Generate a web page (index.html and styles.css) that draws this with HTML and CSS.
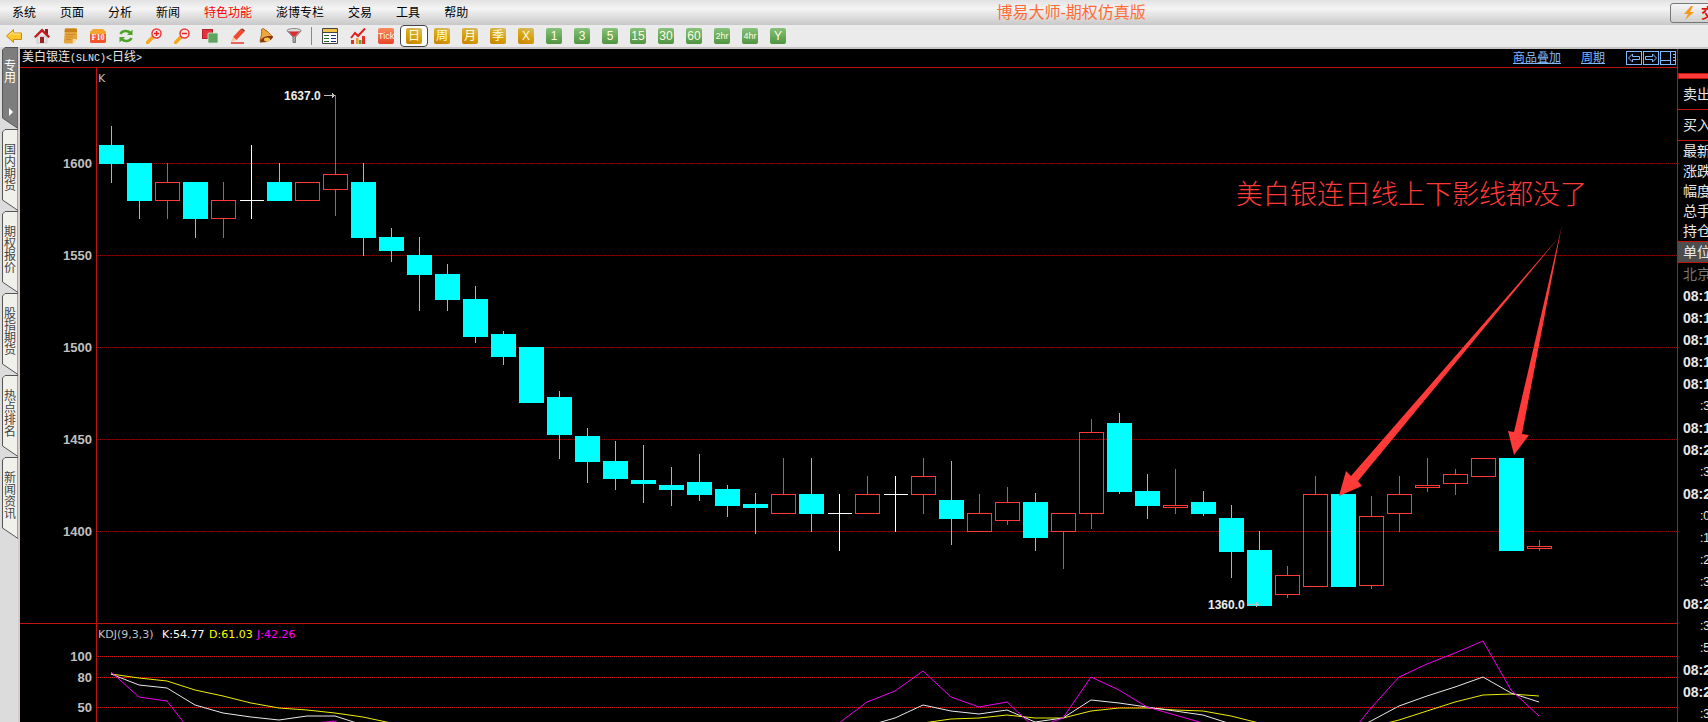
FILE: index.html
```html
<!DOCTYPE html>
<html lang="zh-CN">
<head>
    <meta charset="UTF-8">
    <meta name="viewport" content="width=device-width, initial-scale=1.0">
    <title>博易大师-期权仿真版</title>
    <link rel="stylesheet" href="styles.css">
</head>
<body>
    <header class="menubar">
        <nav class="menu">
            <button>系统</button>
            <button>页面</button>
            <button>分析</button>
            <button>新闻</button>
            <button class="hot">特色功能</button>
            <button>澎博专栏</button>
            <button>交易</button>
            <button>工具</button>
            <button>帮助</button>
        </nav>
        <h1>博易大师-期权仿真版</h1>
        <div class="trade-box">
            <button class="trade">
                <svg width="12" height="16" viewBox="0 0 12 16"><path d="M8 1L1 9h4l-3 6 9-8H7l3-6z" fill="#f39a1d"/></svg>
                交易
            </button>
        </div>
    </header>

    <div class="toolbar">
        <button class="tool" aria-label="后退">
            <svg viewBox="0 0 16 16"><path d="M.5 8L7.500 1.500V5H15.500v6.500H7.500V14.500z" fill="#fcc62c" stroke="#c98a10"/><path d="M3 7.500l4-3.500v2h7.500" fill="none" stroke="#ffe88a"/></svg>
        </button>
        <button class="tool" aria-label="首页">
            <svg viewBox="0 0 16 16"><path d="M3 8h10v7H3z" fill="#e4e4e4" stroke="#aaa" stroke-width=".5"/><path d="M11 1h3v5h-3z" fill="#8a2020"/><path d="M0 8.500L8 .5l8 8-1.500 1.500L8 4 1.500 10z" fill="#c11920"/><path d="M6 9h4v6H6z" fill="#922"/></svg>
        </button>
        <button class="tool" aria-label="便签">
            <svg viewBox="0 0 16 16"><path d="M3 .5h11q1 0 1 1V11l-4 4.500H3q-2-1-1-3z" fill="#e5a33a"/><path d="M3 .5h11q1 0 1 1V4H2.500z" fill="#c98219"/><path d="M10.500 15.500L11 11h4z" fill="#fbe2a4"/><path d="M4 6.500h9M4 9h7M4 11.500h5" stroke="#c5862a" stroke-width=".8"/></svg>
        </button>
        <button class="tool" aria-label="F10">
            <svg viewBox="0 0 16 16"><rect y="3" width="16" height="12" rx="1.500" fill="#f0562c"/><path d="M0 4l3-3h10l3 3v2H0z" fill="#f5a62f"/><text x="8" y="12" class="f10">F10</text></svg>
        </button>
        <button class="tool" aria-label="刷新">
            <svg viewBox="0 0 16 16" fill="none" stroke="#4ea32a" stroke-width="2.500"><path d="M2.500 6C4 2.500 9.500 2 12.500 5"/><path d="M13.500 10C12 13.500 6.500 14 3.500 11"/><path d="M14.500 1.500V7H9zM1.500 14.500V9H7z" fill="#4ea32a" stroke="none"/></svg>
        </button>
        <button class="tool" aria-label="放大">
            <svg viewBox="0 0 16 16"><path d="M1.500 14.500L7 9" stroke="#f5a81c" stroke-width="3.500" stroke-linecap="round"/><circle cx="10.500" cy="5.500" r="4.500" fill="#ffe9e6" stroke="#ea3a3a" stroke-width="1.500"/><path d="M8 5.500h5M10.500 3v5" stroke="#e02020" stroke-width="1.500"/></svg>
        </button>
        <button class="tool" aria-label="缩小">
            <svg viewBox="0 0 16 16"><path d="M1.500 14.500L7 9" stroke="#f5a81c" stroke-width="3.500" stroke-linecap="round"/><circle cx="10.500" cy="5.500" r="4.500" fill="#ffe9e6" stroke="#ea3a3a" stroke-width="1.500"/><path d="M8 5.500h5" stroke="#e02020" stroke-width="1.500"/></svg>
        </button>
        <button class="tool" aria-label="叠加">
            <svg viewBox="0 0 16 16"><rect x=".5" y="1.500" width="10" height="9" fill="#e2343a" stroke="#b51f26"/><rect x="6" y="5" width="10" height="10" rx="1" fill="#5fa562" stroke="#d5e9d5" stroke-width=".8"/></svg>
        </button>
        <button class="tool" aria-label="画线">
            <svg viewBox="0 0 16 16"><path d="M3 9L10.500 1 14 4 6.500 12z" fill="#ee4a32"/><path d="M10.500 1L14 4l1-1.500L12.500.5z" fill="#a82d20"/><path d="M3 9l3.500 3L1 14z" fill="#f5c795"/><path d="M1 15h13" stroke="#e83a2c" stroke-width="1.500"/></svg>
        </button>
        <button class="tool" aria-label="预警">
            <svg viewBox="0 0 16 16"><path d="M3.500 1.500c1-1.500 3-1 3.500.5 3 .5 4 4 8 7L2.500 14.500C1 12 4.500 8 3.500 1.500z" fill="#eda83a" stroke="#9b4d10" stroke-width=".8"/><path d="M2 13c2-4 8-6 13-4.500-.5 4-10 8-13 4.500z" fill="#8a3410"/><ellipse cx="9" cy="11.500" rx="3" ry="2" fill="#f6c850"/></svg>
        </button>
        <button class="tool" aria-label="筛选">
            <svg viewBox="0 0 16 16"><path d="M1.500 3L7 9v5.500h2.500V9L15 3z" fill="#aaa" stroke="#777"/><ellipse cx="8" cy="2.500" rx="7" ry="2" fill="#ddd" stroke="#888"/><path d="M3 3.500h10L9 8.500H7z" fill="#e22832"/></svg>
        </button>
        <span class="divider"></span>
        <button class="tool" aria-label="报价">
            <svg viewBox="0 0 16 16"><path d="M.5 .5h15v15H.5z" fill="#fff" stroke="#444"/><path d="M1 1h14v3H1z" fill="#f0c348"/><path d="M0 4.500h16" stroke="#444"/><path d="M2 7.500h5M2 10.500h5M2 13.500h5" stroke="#216b34"/><path d="M9 7.500h5M9 10.500h5M9 13.500h5" stroke="#1c2d86"/></svg>
        </button>
        <button class="tool" aria-label="走势">
            <svg viewBox="0 0 16 16"><path d="M1 12h3v4H1zM12 8h3v8h-3z" fill="#e03028"/><path d="M6 10h2.500v6H6z" fill="#f09a28"/><path d="M9 12h2.500v4H9z" fill="#54a53c"/><path d="M1 10l4-5 3 3 7-7.500" fill="none" stroke="#e01f1f" stroke-width="2"/></svg>
        </button>
        <button class="tool"><span class="key tick">Tick</span></button>
        <button class="tool on"><span class="key gold">日</span></button>
        <button class="tool"><span class="key gold">周</span></button>
        <button class="tool"><span class="key gold">月</span></button>
        <button class="tool"><span class="key gold">季</span></button>
        <button class="tool"><span class="key gold">X</span></button>
        <button class="tool"><span class="key">1</span></button>
        <button class="tool"><span class="key">3</span></button>
        <button class="tool"><span class="key">5</span></button>
        <button class="tool"><span class="key">15</span></button>
        <button class="tool"><span class="key">30</span></button>
        <button class="tool"><span class="key">60</span></button>
        <button class="tool"><span class="key small">2hr</span></button>
        <button class="tool"><span class="key small">4hr</span></button>
        <button class="tool"><span class="key">Y</span></button>
    </div>

    <main class="workspace">
        <aside class="tabs">
            <button class="tab active"><svg width="16" height="82"><path d="M16 .5H3L.5 3v68L16 81.500z"/></svg><span>专用</span><i></i></button>
            <button class="tab"><svg width="16" height="82"><path d="M16 .5H3L.5 3v68L16 81.500z"/></svg><span>国内期货</span></button>
            <button class="tab"><svg width="16" height="82"><path d="M16 .5H3L.5 3v68L16 81.500z"/></svg><span>期权报价</span></button>
            <button class="tab"><svg width="16" height="82"><path d="M16 .5H3L.5 3v68L16 81.500z"/></svg><span>股指期货</span></button>
            <button class="tab"><svg width="16" height="82"><path d="M16 .5H3L.5 3v68L16 81.500z"/></svg><span>热点排名</span></button>
            <button class="tab"><svg width="16" height="82"><path d="M16 .5H3L.5 3v68L16 81.500z"/></svg><span>新闻资讯</span></button>
        </aside>

        <section class="chart">
            <div class="chart-head">
                <h2>美白银连<span class="code">(SLNC)&lt;</span>日线<span class="code">&gt;</span></h2>
                <a href="#">商品叠加</a>
                <a href="#">周期</a>
                <div class="pager">
                    <button aria-label="上一个"><svg width="14" height="12"><path d="M1.500 6L5.500 2v2.500h7v3h-7V10z"/></svg></button>
                    <button aria-label="下一个"><svg width="14" height="12"><path d="M12.500 6L8.500 2v2.500h-7v3h7V10z"/></svg></button>
                    <button aria-label="分栏"><svg width="14" height="12"><path d="M0 8.500h10M9.500 0v12M12 2.500h2M12 5.500h2M12 8.500h2"/></svg></button>
                </div>
            </div>
            <svg id="plot" class="plot">
                <g id="grid"></g>
                <g id="candles"></g>
                <g id="kdj"></g>
                <path class="frame" d="M76.500 0V2000"/>
                <line class="frame" x1="0" x2="100%" y1="555.5" y2="555.5"/>
                <text class="name" x="78" y="14">K</text>
                <text class="mark" x="264" y="32">1637.0</text>
                <path class="pointer" d="M304 27.500h11M312.500 25v5M313.500 26v3"/>
                <text class="mark" x="1188" y="541">1360.0</text>
                <path class="pointer" d="M1228 536.500h11M1236.500 534v5M1237.500 535v3"/>
                <text class="kdj-text" y="570"><tspan x="78" class="c-name">KDJ(9,3,3)</tspan><tspan x="142" class="c-k">K:54.77</tspan><tspan x="189" class="c-d">D:61.03</tspan><tspan x="237" class="c-j">J:42.26</tspan></text>
                <text class="note" x="1216" y="136">美白银连日线上下影线都没了</text>
                <polygon class="arrow" points="1540,168 1331,408 1326,403 1319,428 1342,418 1338,413"/>
                <polygon class="arrow" points="1542,157 1494,364 1488,363 1494,387 1509,367 1502,366"/>
            </svg>
        </section>

        <aside class="quote">
            <div class="quote-bar"></div>
            <div class="side">卖出</div>
            <div class="side">买入</div>
            <ul class="fields">
                <li>最新</li>
                <li>涨跌</li>
                <li>幅度</li>
                <li>总手</li>
                <li>持仓</li>
            </ul>
            <div class="unit">单位</div>
            <div class="zone">北京</div>
            <ul class="ticks" id="ticks"></ul>
        </aside>
    </main>
    <script src="chart.js"></script>
</body>
</html>
```
FILE: styles.css
```css
* {
    box-sizing: border-box;
}
body {
    margin: 0;
    height: 100vh;
    display: flex;
    flex-direction: column;
    overflow: hidden;
    background: #000;
    font: 12px/16px "Liberation Sans", "Noto Sans CJK SC", sans-serif;
}
button {
    margin: 0;
    padding: 0;
    border: none;
    background: none;
    font: inherit;
    color: #000;
    cursor: pointer;
}
h1, h2, ul {
    margin: 0;
    padding: 0;
    font-weight: normal;
    list-style: none;
}

/* menu */
.menubar {
    flex: none;
    height: 25px;
    display: flex;
    align-items: center;
    background: linear-gradient(#e2e2e2, #f4f4f4 35%, #c8c8c8);
}
.menu {
    display: flex;
    gap: 24px;
    padding-left: 12px;
    white-space: nowrap;
}
.menu .hot {
    color: #f00;
}
.menubar h1 {
    flex: 1;
    padding-left: 4px;
    text-align: center;
    font-size: 16px;
    line-height: 24px;
    color: #ff6c36;
}
.trade-box {
    width: 38px;
    overflow: hidden;
}
.trade {
    display: flex;
    align-items: center;
    gap: 6px;
    width: 72px;
    height: 20px;
    padding-left: 12px;
    border: 1px solid #777;
    border-radius: 3px;
    background: linear-gradient(#f6f6f6, #d0d0d0);
    font-size: 14px;
    font-weight: bold;
    color: #e01010;
}

/* toolbar */
.toolbar {
    flex: none;
    height: 24px;
    display: flex;
    border-bottom: 2px solid #c9c4c4;
    background: #ebebeb;
}
.tool {
    width: 28px;
    height: 22px;
    display: flex;
    align-items: center;
    justify-content: center;
}
.tool svg {
    width: 16px;
    height: 16px;
}
.tool.on {
    border: 1px solid #444;
    border-radius: 4px;
    background: #fff;
}
.f10 {
    font: bold 8px "Liberation Serif", serif;
    fill: #fff;
    text-anchor: middle;
}
.divider {
    width: 1px;
    height: 18px;
    margin: 2px 4px 0 3px;
    background: #888;
}
.key {
    width: 16px;
    height: 16px;
    border-radius: 2px;
    background: linear-gradient(#87c27a, #4f9440);
    color: #fffde0;
    font-size: 12px;
    line-height: 16px;
    text-align: center;
}
.key.gold {
    background: linear-gradient(20deg, #c78000, #d8a50c 50%, #d8bd72);
}
.key.tick {
    background: linear-gradient(#f98a60, #e8452a);
    font-size: 9px;
}
.key.small {
    font-size: 9px;
}

/* left tabs */
.workspace {
    flex: 1;
    min-height: 0;
    display: flex;
}
.tabs {
    flex: none;
    width: 20px;
    margin-top: -2px;
    padding-left: 2px;
    border-right: 2px solid #d4cccc;
    background: #dcdcdc;
}
.tab {
    position: relative;
    display: block;
    width: 16px;
    height: 82px;
    padding: 15px 2px 0;
    font-size: 12px;
    line-height: 12px;
    color: #444;
}
.tab svg {
    position: absolute;
    top: 0;
    left: 0;
    fill: #f1f1ec;
    stroke: #555;
}
.tab span {
    position: relative;
    display: block;
    height: 67px;
    word-break: break-all;
}
.tab.active {
    padding-top: 11px;
    color: #fff;
}
.tab.active svg {
    fill: #7d7d7d;
}
.tab i {
    position: absolute;
    left: 7px;
    top: 61px;
    border: 4px solid transparent;
    border-left-color: #fff;
    border-right: none;
}

/* chart */
.chart {
    flex: 1;
    min-width: 0;
    display: flex;
    flex-direction: column;
}
.chart-head {
    flex: none;
    height: 19px;
    display: flex;
    align-items: center;
    padding: 0 1px 1px 2px;
    border-bottom: 1px solid #c01410;
}
.chart-head h2 {
    flex: 1;
    font-size: 12px;
    line-height: 16px;
    color: #e8e8e8;
}
.code {
    font-family: "Liberation Mono", monospace;
    font-size: 10px;
}
.chart-head a {
    margin-right: 20px;
    color: #7fb8ff;
}
.pager {
    display: flex;
    gap: 1px;
    padding-left: 1px;
}
.pager button {
    width: 16px;
    height: 14px;
    border: 1px solid #7fb8ff;
}
.pager svg {
    display: block;
    fill: none;
    stroke: #7fb8ff;
}
.plot {
    flex: 1;
    width: 100%;
    min-height: 0;
    display: block;
}
.frame {
    stroke: #c01410;
}
.grid-line {
    stroke: #8c0a0a;
    stroke-dasharray: 1 1;
}
.grid-line.bright {
    stroke: #d01818;
}
.axis {
    font: bold 13px "Liberation Sans", sans-serif;
    fill: #c0c0c0;
    text-anchor: end;
}
.mark {
    font: bold 12px "Liberation Sans", sans-serif;
    fill: #eee;
}
.name,
.kdj-text {
    font: 11px "DejaVu Sans", sans-serif;
}
.name {
    fill: #c0c0c0;
}
.pointer {
    fill: none;
    stroke: #c0c0c0;
}
#candles {
    shape-rendering: crispEdges;
}
.up {
    fill: none;
    stroke: #ff3a38;
}
.down {
    fill: #0ff;
    stroke: #0ff;
}
.flat {
    stroke: #fff;
}
.c-name { fill: #c0c0c0; }
.c-k { fill: #fff; }
.c-d { fill: #ff0; }
.c-j { fill: #f0f; }
.line {
    fill: none;
    stroke-width: 1;
}
.line.k { stroke: #e8e8e8; }
.line.d { stroke: #ee0; }
.line.j { stroke: #e0e; }
.note {
    font: 300 27px "Noto Sans CJK SC", sans-serif;
    fill: #ff3a38;
}
.arrow {
    fill: #ff3a38;
}

/* quote panel */
.quote {
    flex: none;
    width: 31px;
    overflow: hidden;
    border-left: 1px solid #c01410;
    color: #e8e8e8;
    font-size: 14px;
    white-space: nowrap;
}
.quote-bar {
    height: 6px;
    margin: 24px 0 0;
    border: 1px solid #c01410;
    border-right: none;
    background: #ff3a38;
}
.side {
    height: 31px;
    padding-left: 5px;
    border-bottom: 1px solid #c01410;
    line-height: 30px;
}
.fields {
    padding-left: 5px;
    line-height: 20px;
}
.unit {
    height: 22px;
    padding-left: 5px;
    border: 1px solid #c01410;
    border-width: 1px 0;
    background: #4d4d4d;
    line-height: 20px;
}
.zone {
    padding-left: 5px;
    line-height: 22px;
    color: #777;
}
.ticks {
    padding-left: 5px;
    line-height: 22px;
    font-weight: bold;
}
.ticks .sec {
    padding-left: 17px;
    font-size: 12px;
    font-weight: normal;
}
```
FILE: chart.js
```js
// high, open, close, low
const bars = [
    [1620, 1610, 1600, 1590], [1600, 1600, 1580, 1570], [1600, 1580, 1590, 1570], [1590, 1590, 1570, 1560],
    [1590, 1570, 1580, 1560], [1610, 1580, 1580, 1570], [1600, 1590, 1580, 1580], [1590, 1580, 1590, 1580],
    [1637, 1586, 1594, 1572], [1600, 1590, 1560, 1550], [1565, 1560, 1553, 1547], [1560, 1550, 1540, 1520],
    [1545, 1540, 1526, 1520], [1533, 1526, 1506, 1503], [1509, 1507, 1495, 1491], [1500, 1500, 1470, 1470],
    [1476, 1473, 1453, 1440], [1456, 1452, 1438, 1427], [1449, 1438, 1429, 1423], [1447, 1428, 1426, 1416],
    [1435, 1425, 1423, 1414], [1442, 1427, 1420, 1417], [1425, 1423, 1414, 1408], [1421, 1415, 1413, 1399],
    [1440, 1410, 1420, 1410], [1440, 1420, 1410, 1400], [1420, 1410, 1410, 1390], [1430, 1410, 1420, 1410],
    [1430, 1420, 1420, 1400], [1440, 1420, 1430, 1410], [1438, 1417, 1407, 1393], [1420, 1400, 1410, 1400],
    [1424, 1406, 1416, 1404], [1421, 1416, 1397, 1390], [1410, 1400, 1410, 1380], [1461, 1410, 1454, 1402],
    [1464, 1459, 1422, 1421], [1431, 1422, 1414, 1407], [1434, 1413, 1414, 1410], [1422, 1416, 1410, 1409],
    [1414, 1407, 1389, 1375], [1400, 1390, 1360, 1360], [1381, 1366, 1376, 1364], [1430, 1370, 1420, 1370],
    [1420, 1420, 1370, 1370], [1419, 1371, 1408, 1369], [1430, 1410, 1420, 1400], [1440, 1424, 1425, 1422],
    [1434, 1426, 1431, 1420], [1440, 1430, 1440, 1430], [1440, 1440, 1390, 1390], [1395, 1391, 1392, 1390]
];

const kdj = {
    d: [83, 79, 76, 67, 61, 54, 49, 47, 45, 41, 35, 30, 26, 23, 21, 20, 18, 17, 16, 15, 15, 16, 17, 18, 20, 22, 25, 28, 31, 35, 39, 40, 43, 40, 40, 46, 49, 49, 47, 46, 42, 35, 29, 25, 26, 31, 38, 46, 55, 62, 63, 61],
    k: [83, 72, 69, 52, 45, 41, 38, 42, 42, 33, 26, 22, 18, 15, 14, 13, 12, 12, 12, 13, 14, 16, 18, 20, 22, 25, 28, 32, 40, 52, 46, 44, 47, 36, 40, 57, 54, 50, 46, 43, 34, 25, 20, 20, 24, 37, 51, 61, 70, 80, 64, 55],
    j: [85, 60, 56, 21, 10, 8, 25, 34, 37, 16, 8, 5, 5, 5, 5, 5, 5, 5, 5, 5, 8, 10, 12, 14, 16, 20, 35, 55, 66, 86, 60, 50, 55, 30, 40, 80, 67, 50, 43, 35, 22, 10, 5, 8, 15, 49, 80, 93, 103, 115, 67, 42]
};

const times = ['08:1', '08:1', '08:1', '08:1', '08:1', ':3', '08:1', '08:2', ':3', '08:2', ':0', ':1', ':2', ':3', '08:2', ':3', ':5', '08:2', '08:2', ':3'];

const xAt = i => 91 + i * 28;
const priceY = p => Math.round(95.2 + (1600 - p) * 1.84);
const kdjY = v => Math.round(588.4 + (100 - v) * 1.02);

function gridLine(y, label, cls) {
    return `<line class="grid-line ${cls}" x1="78" x2="100%" y1="${y + 0.5}" y2="${y + 0.5}"/>` +
        `<text class="axis" x="72" y="${y + 5}">${label}</text>`;
}

let grid = '';
[1600, 1550, 1500, 1450, 1400].forEach(p => grid += gridLine(priceY(p), p, ''));
[100, 80, 50].forEach(v => grid += gridLine(kdjY(v), v, 'bright'));
document.getElementById('grid').innerHTML = grid;

document.getElementById('candles').innerHTML = bars.map(([high, open, close, low], i) => {
    const x = xAt(i);
    const top = priceY(Math.max(open, close));
    const bottom = priceY(Math.min(open, close));
    const cls = close > open ? 'up' : close < open ? 'down' : 'flat';
    let wicks = '';
    if (high > Math.max(open, close)) wicks += `M${x + 0.5} ${priceY(high)}V${top}`;
    if (low < Math.min(open, close)) wicks += `M${x + 0.5} ${bottom + 1}V${priceY(low) + 1}`;
    return `<path class="${cls}" d="${wicks}"/>` +
        `<path class="${cls}" d="M${x - 11.5} ${top + 0.5}h24V${bottom + 0.5}h-24z"/>`;
}).join('');

document.getElementById('kdj').innerHTML = Object.keys(kdj).map(name =>
    `<polyline class="line ${name}" points="${kdj[name].map((v, i) => xAt(i) + ',' + kdjY(v)).join(' ')}"/>`
).join('');

document.getElementById('ticks').innerHTML = times.map(t =>
    `<li${t[0] === ':' ? ' class="sec"' : ''}>${t}</li>`
).join('');
```
